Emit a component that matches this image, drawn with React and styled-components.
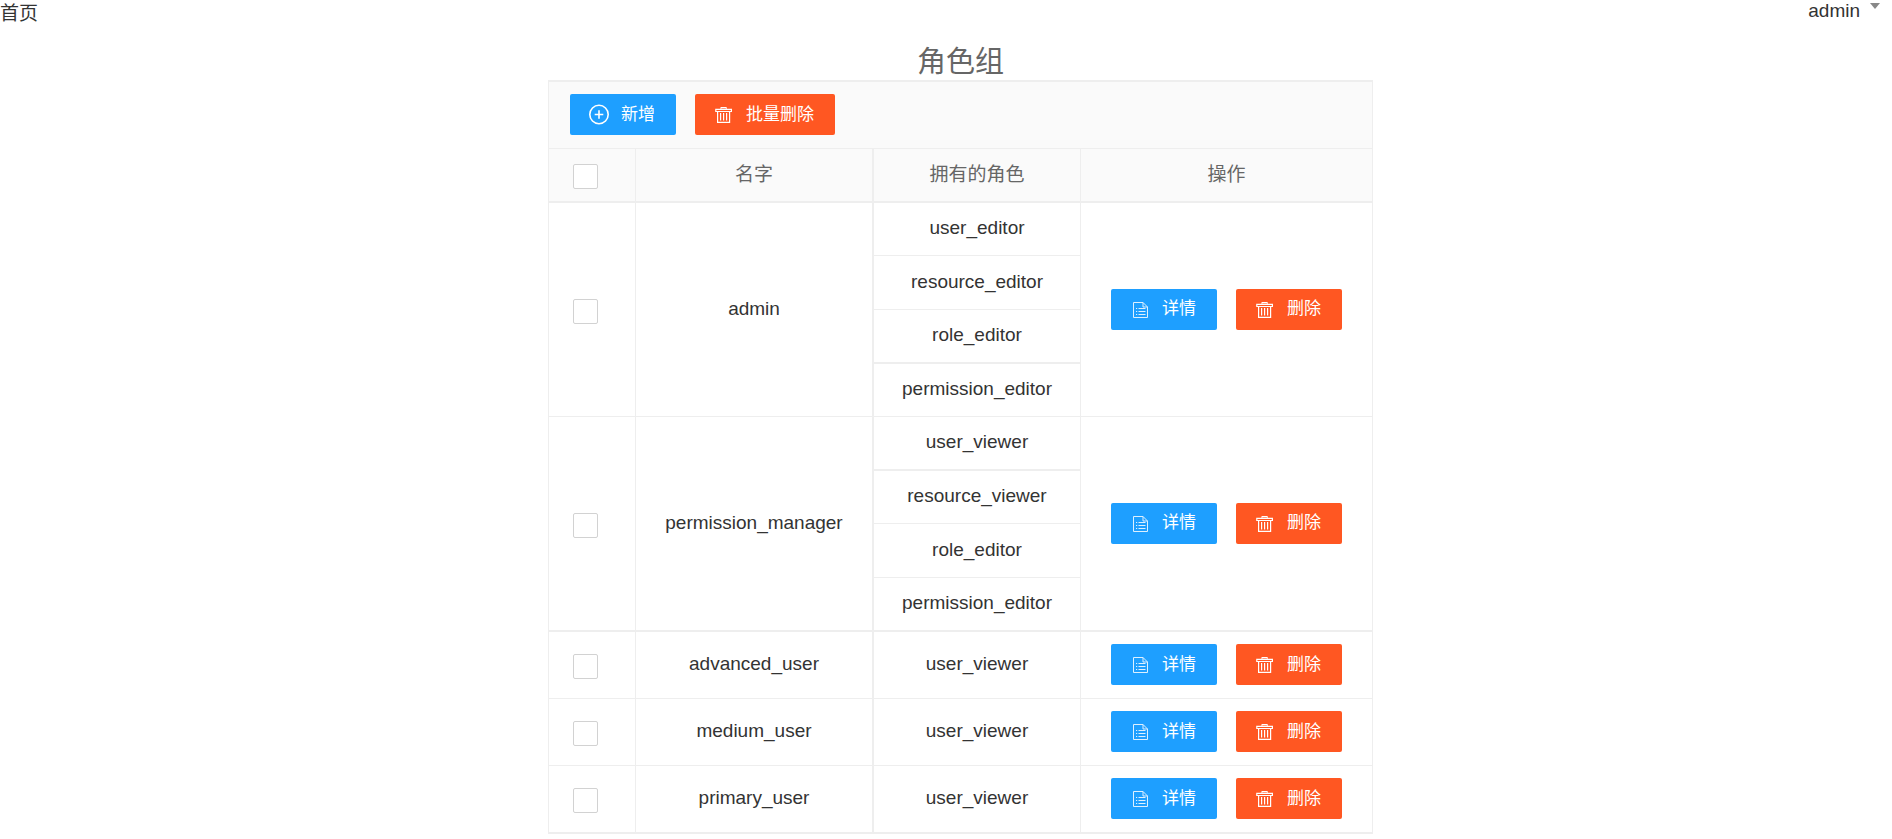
import React from 'react'
import styled, { createGlobalStyle } from 'styled-components'

const GlobalStyle = createGlobalStyle`
  body {
    margin: 0;
    background: #fff;
    color: #333;
    font-family: "Liberation Sans", Arial, "Noto Sans CJK SC", sans-serif;
    font-size: 19px;
    line-height: 24px;
  }
`
const Nav = styled.nav`
  display: flex;
  justify-content: space-between;
  height: 44px;
`
const HomeLink = styled.a`
  padding-top: 2px;
  color: #333;
  text-decoration: none;
`
const UserMenu = styled.button`
  display: flex;
  gap: 10px;
  height: 22px;
  padding: 0 12px 0 0;
  border: 0;
  background: none;
  color: #333;
  font: inherit;
  line-height: 22px;
`
const Caret = styled.span`
  margin-top: 3px;
  width: 0;
  height: 0;
  border: 5px solid transparent;
  border-top: 6px solid #888;
  border-bottom: 0;
`
const Main = styled.main`
  display: flex;
  flex-direction: column;
  align-items: center;
  padding-left: 29px;
`
const Title = styled.h1`
  margin: 0;
  color: #666;
  font-size: 29px;
  font-weight: 400;
  line-height: 36px;
`
const Table = styled.table`
  width: 825px;
  table-layout: fixed;
  border-spacing: 0;
  border-top: 2px solid #eee;
  text-align: center;
`
const Col = styled.col`
  width: ${({ $width }) => $width}px;
`
const Cell = styled.td`
  box-sizing: border-box;
  height: ${({ $height }) => $height || 54}px;
  padding: 0 0 2px;
  border: 0 solid #eee;
  border-right-width: ${({ $wide }) => ($wide ? 2 : 1)}px;
  border-bottom-width: ${({ $rule }) => $rule || 1}px;
`
const CheckCell = styled(Cell)`
  padding: 3px 0 0 24px;
  border-left-width: 1px;
  text-align: left;
`
const ActionCell = styled(Cell)`
  padding: 0 0 1px;
`
const HeadCell = styled(Cell)`
  padding: 0;
  background: #fafafa;
  color: #666;
  font-weight: 400;
`
const HeadCheckCell = styled(CheckCell)`
  background: #fafafa;
`
const ToolCell = styled(HeadCell)`
  padding: 0 21px 1px;
  border-left-width: 1px;
`
const Checkbox = styled.input`
  appearance: none;
  display: block;
  box-sizing: border-box;
  width: 25px;
  height: 25px;
  margin: 0;
  border: 1px solid #d2d2d2;
  border-radius: 2px;
  background: #fff;

  &:checked {
    border-color: #1e9fff;
    background: #1e9fff;
  }
`
const Actions = styled.div`
  display: flex;
  justify-content: ${({ $start }) => ($start ? 'flex-start' : 'center')};
  gap: 19px;
`
const Button = styled.button`
  display: flex;
  align-items: center;
  gap: 12px;
  height: 41px;
  padding: 0 21px 0 18px;
  border: 0;
  border-radius: 2px;
  background: ${({ $danger }) => ($danger ? '#ff5722' : '#1e9fff')};
  color: #fff;
  font: inherit;
  font-size: 17px;
  white-space: nowrap;
`
const Icon = styled.svg`
  flex: none;
  width: 21px;
  height: 21px;
  fill: none;
  stroke: #fff;
`

const AddIcon = () => (
  <Icon viewBox="0 0 21 21" aria-hidden="true" strokeWidth="1.6">
    <circle cx="11" cy="10.5" r="9.2" />
    <path d="M6.7 10.5h8.6M11 6.2v8.6" />
  </Icon>
)

const TrashIcon = () => (
  <Icon viewBox="0 0 21 21" aria-hidden="true" strokeWidth="1.2">
    <path d="M2.8 5.3h15.6v2.2H2.8z" />
    <path d="M7.6 4.6l.6-1h4.8l.6 1" />
    <path d="M4.6 7.5v10.9h12V7.5" />
    <path d="M7.6 9v7.5M10.6 9v7.5M13.6 9v7.5" />
  </Icon>
)

const DetailIcon = () => (
  <Icon viewBox="0 0 21 21" aria-hidden="true" strokeWidth="1" opacity="0.85">
    <path d="M4.5 3.5H14l4.5 4.5v10.5h-14zM14 3.5V8h4.5" />
    <path d="M7 9.5h1.2M9.5 9.5h7M7 12.5h1.2M9.5 12.5h7M7 15.5h1.2M9.5 15.5h7" />
  </Icon>
)

const groups = [
  {
    name: 'admin',
    roles: [
      { name: 'user_editor', height: 53 },
      { name: 'resource_editor' },
      { name: 'role_editor', rule: 2 },
      { name: 'permission_editor', height: 53 },
    ],
  },
  {
    name: 'permission_manager',
    rule: 2,
    roles: [
      { name: 'user_viewer', rule: 2 },
      { name: 'resource_viewer', height: 53 },
      { name: 'role_editor' },
      { name: 'permission_editor', rule: 2 },
    ],
  },
  { name: 'advanced_user', roles: [{ name: 'user_viewer', height: 67 }] },
  { name: 'medium_user', roles: [{ name: 'user_viewer', height: 67 }] },
  { name: 'primary_user', rule: 2, roles: [{ name: 'user_viewer', height: 68, rule: 2 }] },
]

const GroupRows = ({ group }) => {
  const { name, roles, rule } = group
  const span = roles.length

  return roles.map((role, index) => (
    <tr key={role.name}>
      {index === 0 && (
        <>
          <CheckCell rowSpan={span} $rule={rule}>
            <Checkbox type="checkbox" aria-label={name} />
          </CheckCell>
          <Cell rowSpan={span} $rule={rule} $wide>
            {name}
          </Cell>
        </>
      )}
      <Cell $height={role.height} $rule={role.rule}>
        {role.name}
      </Cell>
      {index === 0 && (
        <ActionCell rowSpan={span} $rule={rule}>
          <Actions>
            <Button type="button">
              <DetailIcon />
              详情
            </Button>
            <Button type="button" $danger>
              <TrashIcon />
              删除
            </Button>
          </Actions>
        </ActionCell>
      )}
    </tr>
  ))
}

const App = () => (
  <>
    <GlobalStyle />
    <Nav>
      <HomeLink href="#">首页</HomeLink>
      <UserMenu type="button">
        admin
        <Caret />
      </UserMenu>
    </Nav>
    <Main>
      <Title>角色组</Title>
      <Table>
        <colgroup>
          <Col $width={88} />
          <Col $width={238} />
          <Col $width={207} />
          <Col $width={292} />
        </colgroup>
        <thead>
          <tr>
            <ToolCell colSpan={4} $height={67}>
              <Actions $start>
                <Button type="button">
                  <AddIcon />
                  新增
                </Button>
                <Button type="button" $danger>
                  <TrashIcon />
                  批量删除
                </Button>
              </Actions>
            </ToolCell>
          </tr>
          <tr>
            <HeadCheckCell $rule={2}>
              <Checkbox type="checkbox" aria-label="全选" />
            </HeadCheckCell>
            <HeadCell as="th" $rule={2} $wide>
              名字
            </HeadCell>
            <HeadCell as="th" $rule={2}>
              拥有的角色
            </HeadCell>
            <HeadCell as="th" $rule={2}>
              操作
            </HeadCell>
          </tr>
        </thead>
        <tbody>
          {groups.map(group => (
            <GroupRows key={group.name} group={group} />
          ))}
        </tbody>
      </Table>
    </Main>
  </>
)

export default App
